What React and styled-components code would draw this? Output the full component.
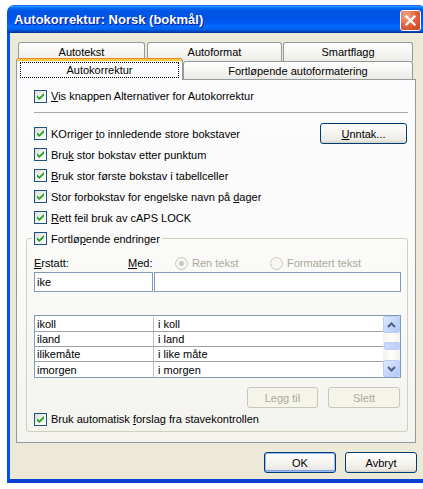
import React from 'react';
import styled, { createGlobalStyle } from 'styled-components';

const GlobalStyle = createGlobalStyle`
  html, body {
    margin: 0;
    padding: 0;
    background: #fff;
    overflow: hidden;
  }
  body {
    font-family: "Liberation Sans", Arial, sans-serif;
    font-size: 11px;
    color: #000;
  }
`;

const Page = styled.div`
  width: 423px;
  height: 489px;
  box-sizing: border-box;
  padding: 5px 0 0 7px;
  overflow: hidden;
`;

const Window = styled.div`
  width: 419px;
  display: flex;
  flex-direction: column;
`;

const TitleBar = styled.div`
  height: 28px;
  border-radius: 7px 7px 0 0;
  background: linear-gradient(
    to bottom,
    #0058ee 0%,
    #3593ff 4%,
    #288eff 6%,
    #127dff 8%,
    #036ffc 10%,
    #0262ee 14%,
    #0057e5 20%,
    #0054e3 24%,
    #0055eb 56%,
    #005bf5 66%,
    #026afe 76%,
    #0062ef 86%,
    #0052d6 92%,
    #0040ab 96%,
    #003092 100%
  );
  display: flex;
  align-items: center;
  justify-content: space-between;
  padding: 0 5px 0 7px;
`;

const Title = styled.span`
  font-family: "Liberation Sans", Arial, sans-serif;
  font-weight: bold;
  font-size: 13px;
  color: #fff;
  text-shadow: 1px 1px #0a1883;
  margin-top: 1px;
`;

const CloseButton = styled.div`
  width: 21px;
  height: 21px;
  box-sizing: border-box;
  border: 1px solid #fff;
  border-radius: 3px;
  margin-top: 3px;
  background: radial-gradient(circle at 30% 25%, #f2a98e 0%, #e2643e 50%, #c4401a 100%);
  display: flex;
  align-items: center;
  justify-content: center;
`;

const Body = styled.div`
  background: #ece9d8;
  border-left: 3px solid #0055e5;
  border-right: 3px solid #0055e5;
  border-bottom: 4px solid #0a3fd0;
  padding: 9px 6px 6px 6px;
  display: flex;
  flex-direction: column;
`;

/* tabs */

const TabRow = styled.div`
  display: flex;
  align-items: flex-end;
  height: ${p => p.$h}px;
  padding-left: ${p => p.$indent}px;
`;

const Tab = styled.div`
  width: ${p => p.$w}px;
  height: ${p => p.$h}px;
  box-sizing: border-box;
  border: 1px solid #919b9c;
  border-bottom: none;
  border-radius: 3px 3px 0 0;
  background: linear-gradient(to bottom, #ffffff 0%, #f7f7f5 40%, #ecebe6 100%);
  display: flex;
  align-items: center;
  justify-content: center;
  margin-right: ${p => p.$mr || 0}px;
`;

const ActiveTab = styled.div`
  position: relative;
  z-index: 2;
  width: ${p => p.$w}px;
  height: 22px;
  margin-bottom: -1px;
  box-sizing: border-box;
  border: 1px solid #919b9c;
  border-top: 1px solid #e68b2c;
  border-bottom: none;
  border-radius: 3px 3px 0 0;
  box-shadow: inset 0 2px #ffc73c;
  background: #fcfcfe;
  display: flex;
  align-items: flex-start;
  justify-content: flex-start;
  padding: 3px 0 0 3px;
`;

const FocusRect = styled.span`
  width: 159px;
  height: 16px;
  box-sizing: border-box;
  border: 1px dotted #000;
  display: flex;
  align-items: center;
  justify-content: center;
`;

const TabPanel = styled.div`
  border: 1px solid #919b9c;
  margin-right: 1px;
  background: linear-gradient(to bottom, #fcfcfe 0%, #f9f9f7 60%, #f4f3ee 100%);
  padding: 6px 7px 10px 9px;
  display: flex;
  flex-direction: column;
`;

/* checkbox rows */

const CheckRow = styled.div`
  height: ${p => p.$h || 21}px;
  display: flex;
  align-items: center;
  justify-content: space-between;
  padding-left: ${p => (p.$pl === undefined ? 8 : p.$pl)}px;
  padding-right: ${p => p.$pr || 0}px;
  margin-top: ${p => p.$mt || 0}px;
`;

const CheckLabel = styled.span`
  display: inline-flex;
  align-items: center;
  gap: 4px;
  white-space: nowrap;
`;

const Box = styled.span`
  width: 13px;
  height: 13px;
  box-sizing: border-box;
  border: 1px solid #1c5180;
  background: linear-gradient(135deg, #dcdcd7 0%, #f3f3ef 55%, #ffffff 100%);
  display: inline-flex;
  align-items: center;
  justify-content: center;
  flex: none;
`;

const Key = styled.span`
  text-decoration: underline;
`;

const Separator = styled.div`
  height: 1px;
  background: #a7a6aa;
  margin: 6px 0 10px 8px;
`;

/* group box */

const Group = styled.fieldset`
  margin: 0;
  padding: 6px 6px 2px 7px;
  border: 1px solid #d0d0bf;
  border-radius: 3px;
  min-width: 0;
`;

const Legend = styled.legend`
  height: 21px;
  display: flex;
  align-items: center;
  padding: 0 2px;
  margin-left: -2px;
`;

const LabelsRow = styled.div`
  height: 16px;
  display: flex;
  align-items: center;
`;

const Cell = styled.span`
  width: ${p => p.$w}px;
  flex: none;
  display: inline-flex;
  align-items: center;
  gap: 4px;
  color: ${p => (p.$disabled ? '#aca899' : '#000')};
`;

const Radio = styled.span`
  width: 13px;
  height: 13px;
  box-sizing: border-box;
  border-radius: 50%;
  border: 1px solid #cac8bb;
  background: #f7f6f0;
  display: inline-flex;
  align-items: center;
  justify-content: center;
  flex: none;
  &::after {
    content: '';
    width: 5px;
    height: 5px;
    border-radius: 50%;
    background: ${p => (p.$on ? '#cac8bb' : 'transparent')};
  }
`;

const InputsRow = styled.div`
  display: flex;
  gap: 1px;
  margin-top: 1px;
`;

const TextBox = styled.div`
  height: 20px;
  box-sizing: border-box;
  border: 1px solid #7f9db9;
  background: #fff;
  width: ${p => (p.$w ? `${p.$w}px` : 'auto')};
  flex: ${p => (p.$w ? 'none' : '1')};
  display: flex;
  align-items: center;
  padding-left: 2px;
`;

/* list */

const ListBox = styled.div`
  margin-top: 23px;
  height: 63px;
  box-sizing: border-box;
  border: 1px solid #7f9db9;
  background: #fff;
  display: flex;
`;

const ListRows = styled.div`
  flex: 1;
  padding-top: 1px;
`;

const ListRow = styled.div`
  height: 15px;
  box-sizing: border-box;
  display: flex;
  border-bottom: ${p => (p.$last ? 'none' : '1px solid #a0a0a0')};
`;

const ListCell = styled.span`
  width: ${p => (p.$w ? `${p.$w}px` : 'auto')};
  flex: ${p => (p.$w ? 'none' : '1')};
  box-sizing: border-box;
  padding-left: ${p => (p.$w ? 2 : 4)}px;
  border-right: ${p => (p.$w ? '1px solid #c0c0c0' : 'none')};
  display: flex;
  align-items: center;
  line-height: 14px;
`;

const ScrollBar = styled.div`
  width: 17px;
  flex: none;
  display: flex;
  flex-direction: column;
  align-items: center;
  background: linear-gradient(to right, #f3f1ec 0%, #fefefb 50%, #f3f1ec 100%);
`;

const ScrollButton = styled.div`
  width: 17px;
  height: 17px;
  box-sizing: border-box;
  border: 1px solid #b9cdf6;
  border-radius: 2px;
  background: linear-gradient(135deg, #dfe8fd 0%, #c6d5fb 55%, #b3c8f6 100%);
  display: flex;
  align-items: center;
  justify-content: center;
`;

const Track = styled.div`
  flex: 1;
  width: 100%;
  display: flex;
  flex-direction: column;
  align-items: center;
  padding-top: 9px;
`;

const Thumb = styled.div`
  width: 16px;
  height: 8px;
  box-sizing: border-box;
  border: 1px solid #b9cdf6;
  border-radius: 2px;
  background: linear-gradient(to right, #cddafc, #bccefa);
`;

/* buttons */

const ButtonsRow = styled.div`
  display: flex;
  justify-content: flex-end;
  gap: ${p => p.$gap}px;
  margin-top: ${p => p.$mt}px;
  margin-right: ${p => p.$mr || 0}px;
`;

const Button = styled.div`
  width: ${p => p.$w}px;
  height: 21px;
  box-sizing: border-box;
  border: 1px solid ${p => (p.$disabled ? '#c9c7ba' : '#003c74')};
  border-radius: 3px;
  background: ${p =>
    p.$disabled
      ? '#f5f4ea'
      : 'linear-gradient(to bottom, #ffffff 0%, #f6f5f1 45%, #ecebe6 85%, #d6d0c5 100%)'};
  color: ${p => (p.$disabled ? '#aca899' : '#000')};
  box-shadow: ${p => (p.$default ? 'inset 0 0 0 1px #9ebaf0, inset 0 -1px 0 1px #7fa0e8' : 'none')};
  display: flex;
  align-items: center;
  justify-content: center;
  flex: none;
`;

const Check = () => (
  <svg width="7" height="7" viewBox="0 0 7 7">
    <path d="M0 2.3 L2.3 4.6 L7 0 L7 2.4 L2.3 7 L0 4.7 Z" fill="#21a121" />
  </svg>
);

const CheckBox = ({ children }) => (
  <CheckLabel>
    <Box>
      <Check />
    </Box>
    <span>{children}</span>
  </CheckLabel>
);

const Arrow = ({ up }) => (
  <svg width="9" height="6" viewBox="0 0 9 6">
    <path
      d={up ? 'M1 5 L4.5 1.5 L8 5' : 'M1 1 L4.5 4.5 L8 1'}
      fill="none"
      stroke="#4d6185"
      strokeWidth="2"
    />
  </svg>
);

const entries = [
  ['ikoll', 'i koll'],
  ['iland', 'i land'],
  ['ilikemåte', 'i like måte'],
  ['imorgen', 'i morgen'],
];

export default function App() {
  return (
    <Page>
      <GlobalStyle />
      <Window>
        <TitleBar>
          <Title>Autokorrektur: Norsk (bokmål)</Title>
          <CloseButton>
            <svg width="13" height="13" viewBox="0 0 13 13">
              <path d="M2.5 2.5 L10.5 10.5 M10.5 2.5 L2.5 10.5" stroke="#fff" strokeWidth="2.2" strokeLinecap="square" />
            </svg>
          </CloseButton>
        </TitleBar>
        <Body>
          <TabRow $h={19} $indent={2}>
            <Tab $w={127} $h={19} $mr={2}>Autotekst</Tab>
            <Tab $w={135} $h={19} $mr={1}>Autoformat</Tab>
            <Tab $w={130} $h={19}>Smartflagg</Tab>
          </TabRow>
          <TabRow $h={18} $indent={0}>
            <ActiveTab $w={167}>
              <FocusRect>Autokorrektur</FocusRect>
            </ActiveTab>
            <Tab $w={230} $h={18}>Fortløpende autoformatering</Tab>
          </TabRow>
          <TabPanel>
            <CheckRow $h={20}>
              <CheckBox><Key>V</Key>is knappen Alternativer for Autokorrektur</CheckBox>
            </CheckRow>
            <Separator />
            <CheckRow $pr={1}>
              <CheckBox>KOrriger <Key>t</Key>o innledende store bokstaver</CheckBox>
              <Button $w={87}><span><Key>U</Key>nntak...</span></Button>
            </CheckRow>
            <CheckRow>
              <CheckBox>Bru<Key>k</Key> stor bokstav etter punktum</CheckBox>
            </CheckRow>
            <CheckRow>
              <CheckBox><Key>B</Key>ruk stor første bokstav i tabellceller</CheckBox>
            </CheckRow>
            <CheckRow>
              <CheckBox>Stor forbokstav for engelske navn på <Key>d</Key>ager</CheckBox>
            </CheckRow>
            <CheckRow>
              <CheckBox><Key>R</Key>ett feil bruk av cAPS LOCK</CheckBox>
            </CheckRow>
            <Group>
              <Legend>
                <CheckBox>Fortlø<Key>p</Key>ende endringer</CheckBox>
              </Legend>
              <LabelsRow>
                <Cell $w={94}><span><Key>E</Key>rstatt:</span></Cell>
                <Cell $w={47}><span><Key>M</Key>ed:</span></Cell>
                <Cell $w={95} $disabled>
                  <Radio $on />
                  <span>Ren tekst</span>
                </Cell>
                <Cell $w={110} $disabled>
                  <Radio />
                  <span>Formatert tekst</span>
                </Cell>
              </LabelsRow>
              <InputsRow>
                <TextBox $w={119}>ike</TextBox>
                <TextBox />
              </InputsRow>
              <ListBox>
                <ListRows>
                  {entries.map(([from, to], i) => (
                    <ListRow key={from} $last={i === entries.length - 1}>
                      <ListCell $w={119}>{from}</ListCell>
                      <ListCell>{to}</ListCell>
                    </ListRow>
                  ))}
                </ListRows>
                <ScrollBar>
                  <ScrollButton><Arrow up /></ScrollButton>
                  <Track><Thumb /></Track>
                  <ScrollButton><Arrow /></ScrollButton>
                </ScrollBar>
              </ListBox>
              <ButtonsRow $gap={10} $mt={9} $mr={1}>
                <Button $w={71} $disabled>Legg til</Button>
                <Button $w={72} $disabled>Slett</Button>
              </ButtonsRow>
              <CheckRow $h={20} $pl={0} $mt={1}>
                <CheckBox>Bruk automatisk <Key>f</Key>orslag fra stavekontrollen</CheckBox>
              </CheckRow>
            </Group>
          </TabPanel>
          <ButtonsRow $gap={9} $mt={9}>
            <Button $w={72} $default>OK</Button>
            <Button $w={72}>Avbryt</Button>
          </ButtonsRow>
        </Body>
      </Window>
    </Page>
  );
}
